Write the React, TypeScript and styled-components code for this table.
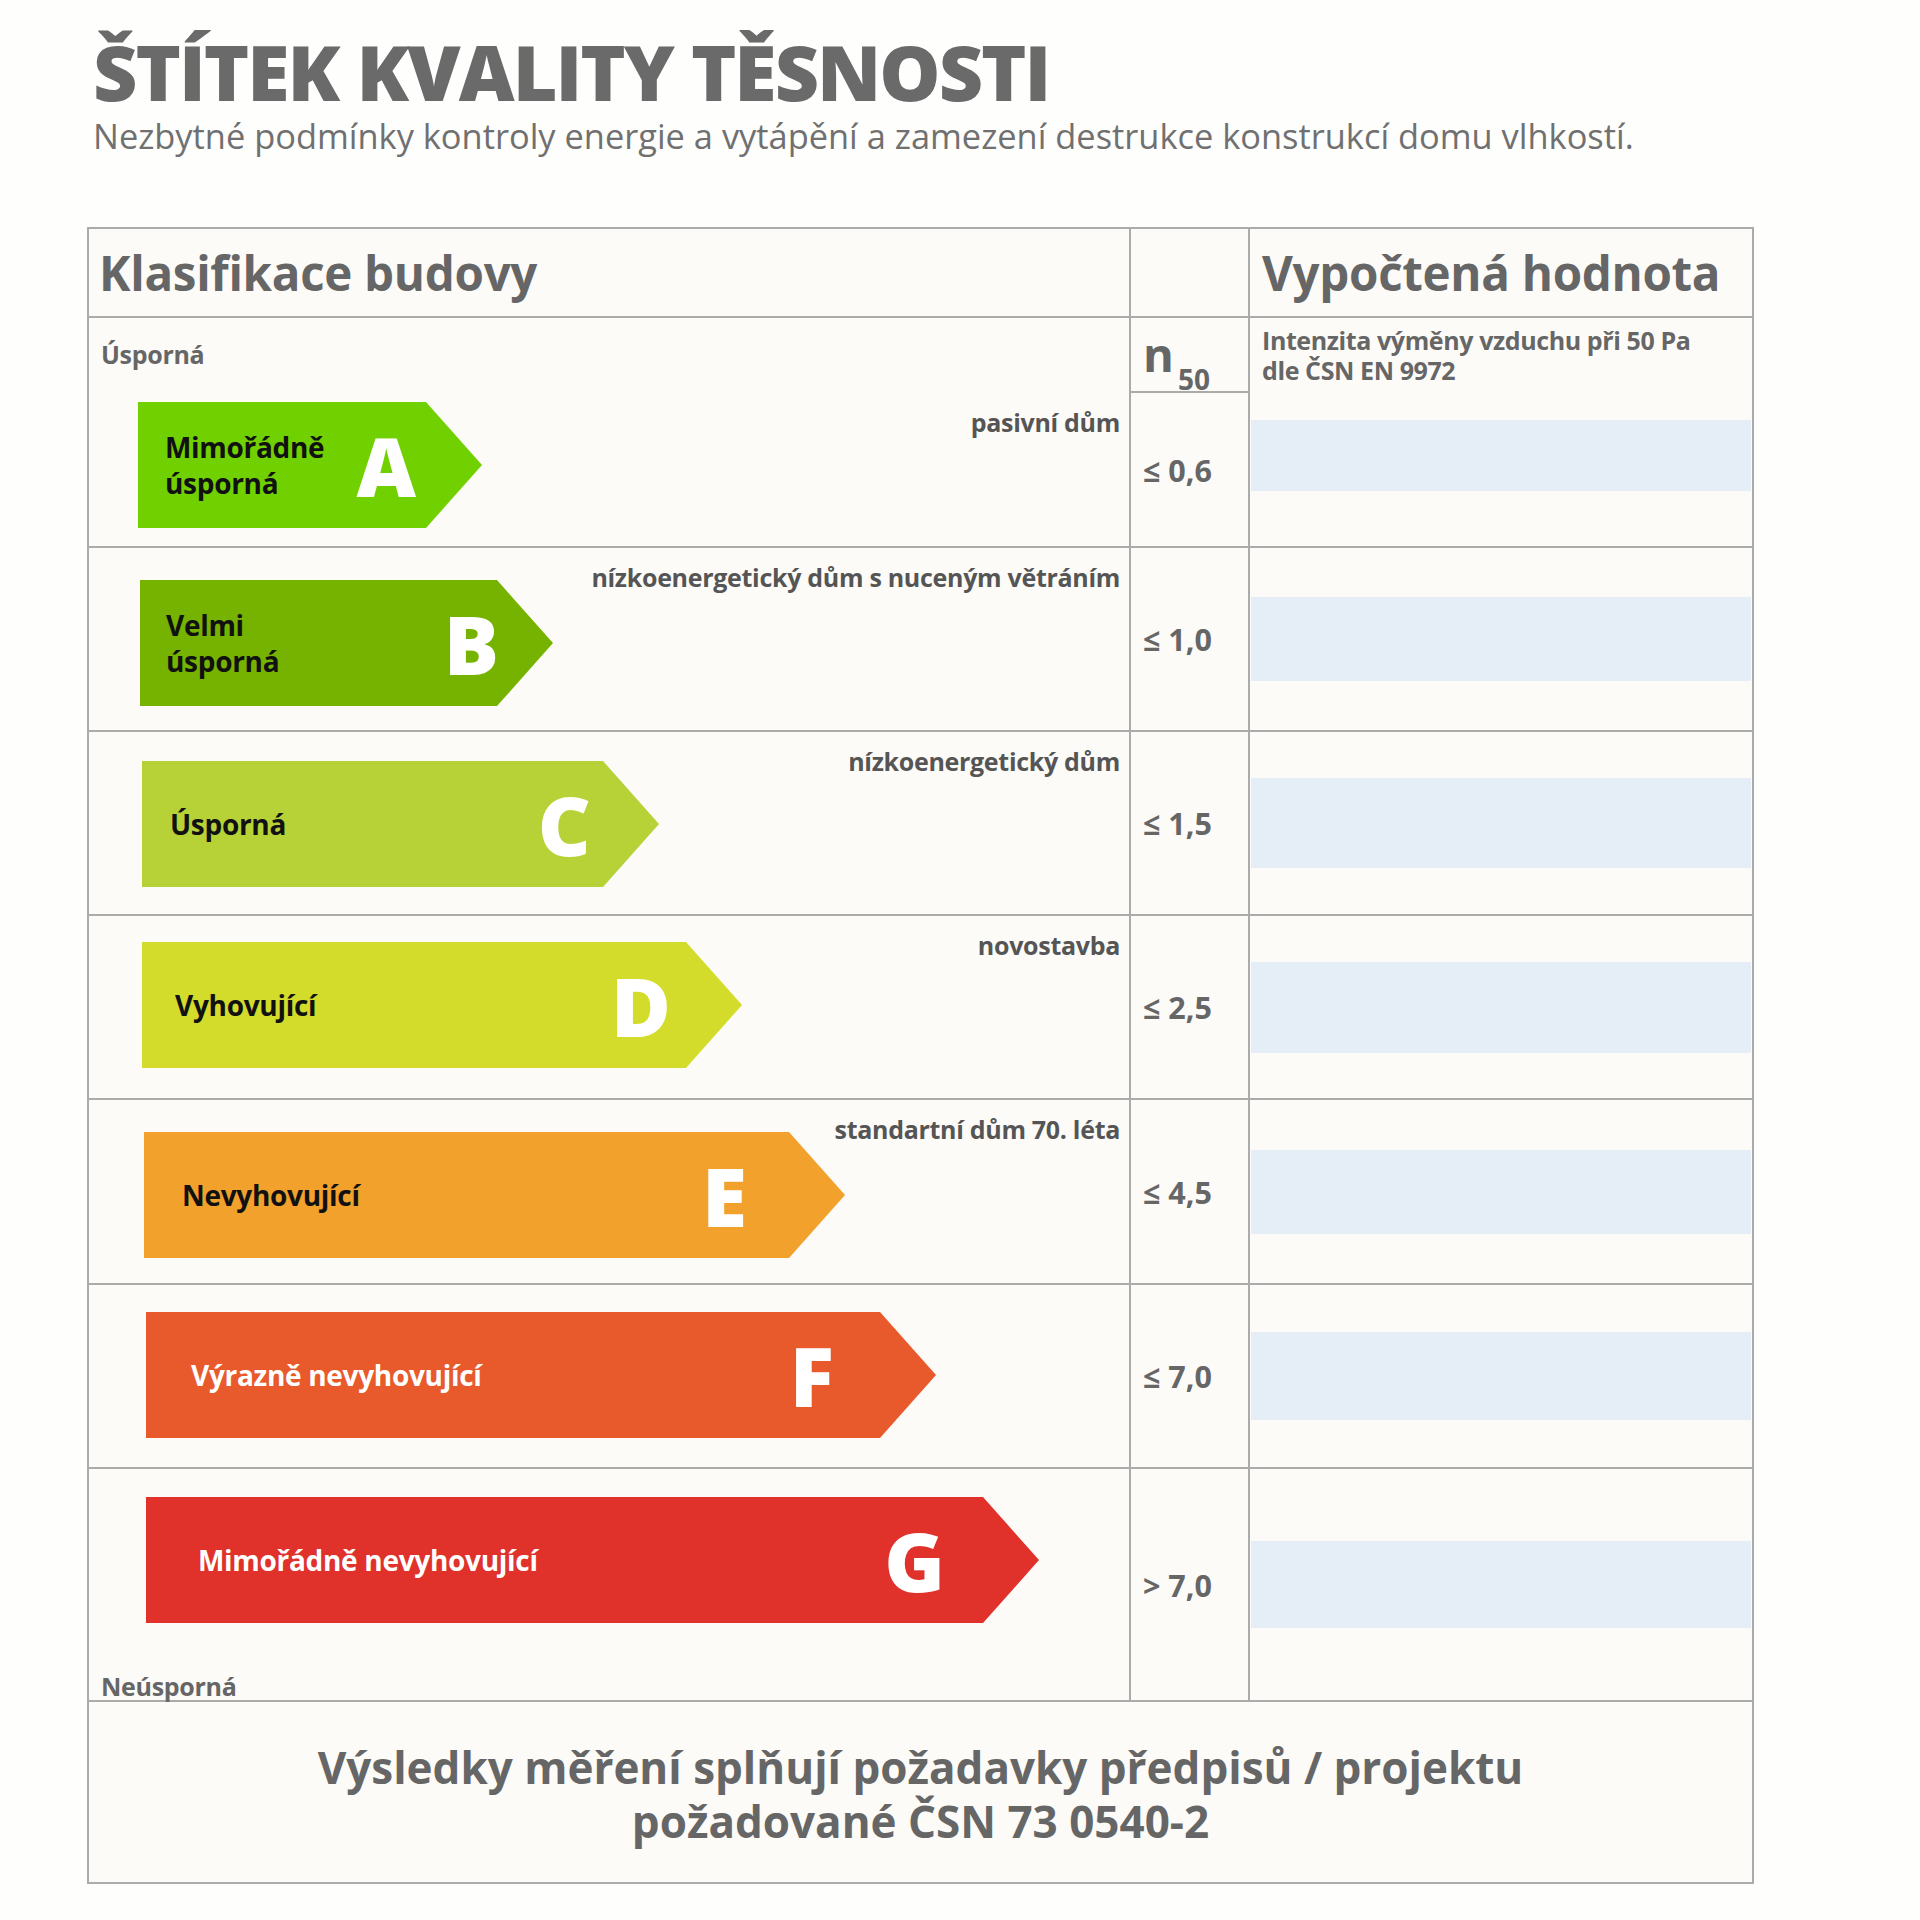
import React from "react";
import styled, { createGlobalStyle } from "styled-components";

const GlobalStyle = createGlobalStyle`
  body {
    margin: 0;
    background: #fefefd;
    font-family: "Open Sans", "DejaVu Sans", sans-serif;
    color: #666;
  }
`;

type Grade = {
  letter: string;
  label: string[];
  color: string;
  ink: string;
  width: number;
  inset: number;
  padLeft: number;
  tipGap: number;
  top: number;
  note?: string;
  noteShift: number;
  value: string;
  bar: number;
};

const grades: Grade[] = [
  { letter: "A", label: ["Mimořádně", "úsporná"], color: "#70d000", ink: "#111", width: 344, inset: 49, padLeft: 27, tipGap: 66, top: 0, note: "pasivní dům", noteShift: 6, value: "≤ 0,6", bar: 71 },
  { letter: "B", label: ["Velmi", "úsporná"], color: "#76b300", ink: "#111", width: 413, inset: 51, padLeft: 26, tipGap: 54, top: 32, note: "nízkoenergetický dům s nuceným větráním", noteShift: -17, value: "≤ 1,0", bar: 84 },
  { letter: "C", label: ["Úsporná"], color: "#b7d236", ink: "#111", width: 517, inset: 53, padLeft: 28, tipGap: 68, top: 29, note: "nízkoenergetický dům", noteShift: -14, value: "≤ 1,5", bar: 90 },
  { letter: "D", label: ["Vyhovující"], color: "#d3dc2b", ink: "#111", width: 600, inset: 53, padLeft: 33, tipGap: 71, top: 26, note: "novostavba", noteShift: -11, value: "≤ 2,5", bar: 91 },
  { letter: "E", label: ["Nevyhovující"], color: "#f1a12c", ink: "#111", width: 701, inset: 55, padLeft: 38, tipGap: 98, top: 32, note: "standartní dům 70. léta", noteShift: -17, value: "≤ 4,5", bar: 84 },
  { letter: "F", label: ["Výrazně nevyhovující"], color: "#e85a2c", ink: "#fff", width: 790, inset: 57, padLeft: 45, tipGap: 102, top: 27, noteShift: 0, value: "≤ 7,0", bar: 88 },
  { letter: "G", label: ["Mimořádně nevyhovující"], color: "#e0312b", ink: "#fff", width: 893, inset: 57, padLeft: 52, tipGap: 94, top: 28, noteShift: 0, value: "> 7,0", bar: 87 },
];

const rowHeights = [228, 182, 182, 182, 183, 182, 231];

const Page = styled.div`
  width: 1920px;
  padding: 30px 0 0 87px;
  box-sizing: border-box;
`;

const Title = styled.h1`
  margin: 0;
  padding-left: 6px;
  font-size: 77px;
  font-weight: 800;
  line-height: 84px;
  letter-spacing: -2px;
  color: #6a6a6a;
`;

const Subtitle = styled.p`
  margin: 0;
  padding-left: 6px;
  font-size: 34.4px;
  font-weight: 400;
  line-height: 44px;
  color: #707070;
`;

const Table = styled.div`
  margin-top: 69px;
  width: 1667px;
  border: 2px solid #ababab;
  background: #fcfbf8;
  box-sizing: border-box;
`;

const Row = styled.div<{ $h: number; $first?: boolean }>`
  display: grid;
  grid-template-columns: 1040px 119px 1fr;
  height: ${(p) => p.$h}px;
  border-top: ${(p) => (p.$first ? "none" : "2px solid #ababab")};
`;

const Cell = styled.div<{ $divider?: boolean }>`
  border-left: ${(p) => (p.$divider ? "2px solid #ababab" : "none")};
  min-width: 0;
`;

const HeadCell = styled(Cell)<{ $pad?: number }>`
  display: flex;
  align-items: center;
  padding-left: ${(p) => p.$pad ?? 12}px;
  font-size: 47.5px;
  font-weight: 700;
  color: #666;
  letter-spacing: -0.3px;
`;

const ClassCell = styled(Cell)<{ $top: number; $inset: number }>`
  display: flex;
  flex-direction: column;
  padding: ${(p) => p.$top}px 9px 0 ${(p) => p.$inset}px;
`;

const EdgeLabel = styled.div<{ $bottom?: boolean; $inset: number }>`
  margin-left: ${(p) => 12 - p.$inset}px;
  margin-top: ${(p) => (p.$bottom ? "auto" : "0")};
  margin-bottom: ${(p) => (p.$bottom ? "0" : "34px")};
  font-size: 25px;
  font-weight: 700;
  line-height: 28px;
  letter-spacing: -0.3px;
  color: #666;
`;

const Stack = styled.div`
  display: grid;
  grid-template-areas: "all";
`;

const Arrow = styled.div<{ $w: number; $bg: string; $ink: string; $pad: number }>`
  grid-area: all;
  justify-self: start;
  display: flex;
  align-items: center;
  width: ${(p) => p.$w}px;
  height: 126px;
  padding-left: ${(p) => p.$pad}px;
  box-sizing: border-box;
  background: ${(p) => p.$bg};
  color: ${(p) => p.$ink};
  clip-path: polygon(0 0, calc(100% - 56px) 0, 100% 50%, calc(100% - 56px) 100%, 0 100%);
`;

const ArrowLabel = styled.div`
  font-size: 28px;
  font-weight: 700;
  line-height: 36px;
  letter-spacing: -0.3px;
  white-space: nowrap;
`;

const Letter = styled.span<{ $gap: number }>`
  margin-left: auto;
  margin-right: ${(p) => p.$gap}px;
  font-size: 82px;
  font-weight: 800;
  line-height: 1;
  color: #fff;
`;

const Note = styled.div<{ $shift: number }>`
  grid-area: all;
  justify-self: end;
  align-self: start;
  margin-top: ${(p) => p.$shift}px;
  font-size: 25px;
  font-weight: 700;
  line-height: 28px;
  color: #555;
  white-space: nowrap;
  letter-spacing: -0.3px;
`;

const ValueCell = styled(Cell)`
  display: flex;
  flex-direction: column;
`;

const UnitBox = styled.div`
  height: 73px;
  border-bottom: 2px solid #ababab;
  display: flex;
  align-items: flex-end;
  padding: 0 0 0 12px;
  color: #666;
  font-weight: 700;
`;

const UnitN = styled.span`
  font-size: 47px;
  line-height: 47px;
  margin-bottom: 13px;
`;

const UnitSub = styled.span`
  font-size: 28px;
  line-height: 28px;
  margin-bottom: -2px;
  margin-left: 4px;
`;

const Value = styled.div`
  flex: 1;
  display: flex;
  align-items: center;
  padding-left: 12px;
  font-size: 30.5px;
  font-weight: 700;
  color: #666;
`;

const ResultCell = styled(Cell)<{ $first?: boolean }>`
  display: flex;
  flex-direction: column;
  justify-content: ${(p) => (p.$first ? "flex-start" : "center")};
  padding: ${(p) => (p.$first ? "7px 1px 0" : "0 1px")};
`;

const ResultNote = styled.div`
  padding-left: 11px;
  margin-bottom: 35px;
  font-size: 25px;
  font-weight: 700;
  line-height: 30px;
  color: #666;
  letter-spacing: -0.4px;
  white-space: nowrap;
`;

const Bar = styled.div<{ $h: number }>`
  height: ${(p) => p.$h}px;
  background: #e5edf7;
`;

const Footer = styled.div`
  height: 182px;
  border-top: 2px solid #ababab;
  display: flex;
  flex-direction: column;
  align-items: center;
  justify-content: center;
  padding-top: 4px;
  box-sizing: border-box;
  font-size: 44px;
  font-weight: 700;
  line-height: 54px;
  color: #666;
  text-align: center;
`;

export default function App() {
  return (
    <>
      <GlobalStyle />
      <Page>
        <Title>ŠTÍTEK KVALITY TĚSNOSTI</Title>
        <Subtitle>
          Nezbytné podmínky kontroly energie a vytápění a zamezení destrukce konstrukcí domu vlhkostí.
        </Subtitle>
        <Table>
          <Row $h={87} $first>
            <HeadCell $pad={10}>Klasifikace budovy</HeadCell>
            <HeadCell $divider />
            <HeadCell $divider>Vypočtená hodnota</HeadCell>
          </Row>
          {grades.map((g, i) => {
            const first = i === 0;
            const last = i === grades.length - 1;
            return (
              <Row key={g.letter} $h={rowHeights[i]}>
                <ClassCell $top={first ? 22 : g.top} $inset={g.inset}>
                  {first && <EdgeLabel $inset={g.inset}>Úsporná</EdgeLabel>}
                  <Stack>
                    <Arrow $w={g.width} $bg={g.color} $ink={g.ink} $pad={g.padLeft}>
                      <ArrowLabel>
                        {g.label.map((l) => (
                          <div key={l}>{l}</div>
                        ))}
                      </ArrowLabel>
                      <Letter $gap={g.tipGap}>{g.letter}</Letter>
                    </Arrow>
                    {g.note && <Note $shift={g.noteShift}>{g.note}</Note>}
                  </Stack>
                  {last && (
                    <EdgeLabel $bottom $inset={g.inset}>
                      Neúsporná
                    </EdgeLabel>
                  )}
                </ClassCell>
                <ValueCell $divider>
                  {first && (
                    <UnitBox>
                      <UnitN>n</UnitN>
                      <UnitSub>50</UnitSub>
                    </UnitBox>
                  )}
                  <Value>{g.value}</Value>
                </ValueCell>
                <ResultCell $divider $first={first}>
                  {first && (
                    <ResultNote>
                      Intenzita výměny vzduchu při 50 Pa
                      <br />
                      dle ČSN EN 9972
                    </ResultNote>
                  )}
                  <Bar $h={g.bar} />
                </ResultCell>
              </Row>
            );
          })}
          <Footer>
            <div>Výsledky měření splňují požadavky předpisů / projektu</div>
            <div>požadované ČSN 73 0540-2</div>
          </Footer>
        </Table>
      </Page>
    </>
  );
}
